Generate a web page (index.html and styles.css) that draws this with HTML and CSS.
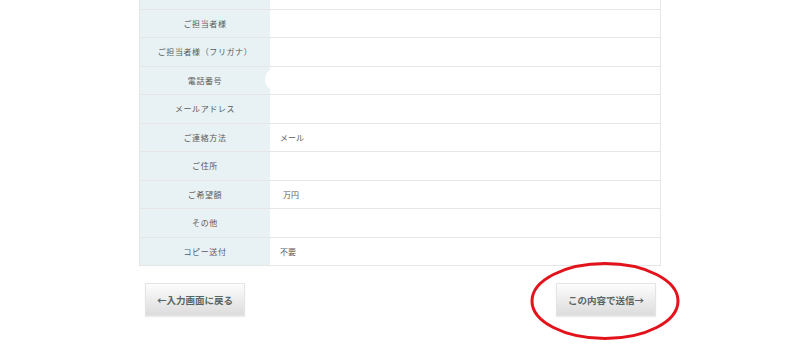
FILE: index.html
```html
<!DOCTYPE html>
<html lang="ja">
<head>
<meta charset="UTF-8" />
<meta name="viewport" content="width=device-width, initial-scale=1" />
<title>お問い合わせ内容の確認</title>
<link rel="stylesheet" href="styles.css">
</head>
<body>
<div class="confirm">
    <table class="confirm-table">
        <tr><th></th><td></td></tr>
        <tr><th>ご担当者様</th><td></td></tr>
        <tr><th>ご担当者様（フリガナ）</th><td></td></tr>
        <tr><th>電話番号</th><td class="masked"><span class="blank"></span></td></tr>
        <tr><th>メールアドレス</th><td></td></tr>
        <tr><th>ご連絡方法</th><td>メール</td></tr>
        <tr><th>ご住所</th><td></td></tr>
        <tr><th>ご希望額</th><td class="amount">万円</td></tr>
        <tr><th>その他</th><td></td></tr>
        <tr><th>コピー送付</th><td>不要</td></tr>
    </table>

    <div class="actions">
        <button class="btn">←入力画面に戻る</button>
        <div class="submit-wrap">
            <button class="btn">この内容で送信→</button>
            <svg class="mark" width="152" height="82" viewBox="0 0 152 82">
                <ellipse cx="75" cy="39" rx="73" ry="37.5" fill="none" stroke="#e3131b" stroke-width="3" />
            </svg>
        </div>
    </div>
</div>
</body>
</html>
```

FILE: styles.css
```css
html, body {
min-height: 350px;
}

body {
margin: 0;
background: #fff;
font-family: "Noto Sans CJK JP", "Noto Sans", sans-serif;
color: #555;
}

.confirm {
width: 522px;
margin: -20px auto 0;
padding-bottom: 40px;
}

.confirm-table {
width: 100%;
border-collapse: collapse;
border: 1px solid #e6e6e6;
font-size: 8px;
}

.confirm-table th,
.confirm-table td {
height: 27.5px;
padding: 0;
border-bottom: 1px solid #e6e6e6;
font-weight: normal;
}

.confirm-table th {
width: 130px;
background: #e8f1f3;
text-align: center;
color: #5a5a5a;
letter-spacing: 0.6px;
}

.confirm-table td {
padding-left: 10px;
background: #fff;
color: #5a5a5a;
}

.confirm-table td.amount {
padding-left: 13px;
}

.masked {
position: relative;
}

/* 伏せ字部分 */
.blank {
position: absolute;
left: -5px;
top: 1.5px;
width: 90px;
height: 23px;
border-radius: 12px;
background: #fff;
}

.actions {
display: flex;
justify-content: space-between;
align-items: flex-start;
padding: 17px 5px 0 6px;
}

.submit-wrap {
position: relative;
}

.btn {
width: 100px;
height: 33px;
padding: 0;
border: 1px solid #e4e4e4;
background: linear-gradient(#fdfdfd, #dcdcdc);
box-shadow: 0 1px 1px rgba(0, 0, 0, 0.08);
font-family: "Noto Sans CJK JP", serif;
font-size: 9.5px;
font-weight: bold;
color: #566565;
cursor: pointer;
}

.mark {
position: absolute;
left: -26px;
top: -21px;
pointer-events: none;
}
```
